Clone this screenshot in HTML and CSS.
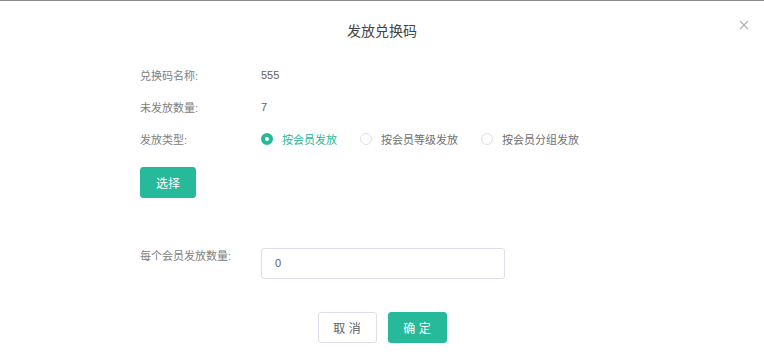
FILE: index.html
```html
<!DOCTYPE html>
<html lang="zh-CN">
<head>
  <meta charset="UTF-8">
  <title>发放兑换码</title>
  <link rel="stylesheet" href="styles.css">
</head>
<body>
  <div class="topline"></div>
  <div class="dialog">
    <div class="header">
      <span class="title">发放兑换码</span>
      <span class="close">
        <svg width="10" height="10" viewBox="0 0 10 10"><path d="M1 1L9 9M9 1L1 9" stroke="#b4b4b4" stroke-width="1.2" fill="none"/></svg>
      </span>
    </div>

    <div class="form">
      <div class="row">
        <span class="label">兑换码名称:</span>
        <span class="value">555</span>
      </div>
      <div class="row">
        <span class="label">未发放数量:</span>
        <span class="value">7</span>
      </div>
      <div class="row">
        <span class="label">发放类型:</span>
        <div class="radios">
          <label class="radio checked"><span class="dot"></span>按会员发放</label>
          <label class="radio"><span class="dot"></span>按会员等级发放</label>
          <label class="radio"><span class="dot"></span>按会员分组发放</label>
        </div>
      </div>
      <div class="pick-row">
        <button class="btn primary">选择</button>
      </div>
      <div class="row input-row">
        <span class="label">每个会员发放数量:</span>
        <div class="input">0</div>
      </div>
    </div>

    <div class="footer">
      <button class="btn">取 消</button>
      <button class="btn primary">确 定</button>
    </div>
  </div>
</body>
</html>
```

FILE: styles.css
```css
body {
  margin: 0;
  background: #fff;
  font-family: "Liberation Sans", "Noto Sans CJK SC", sans-serif;
  font-size: 11px;
  color: #666;
}

.topline {
  height: 1px;
  background: #8c8c8c;
}

.header {
  position: relative;
  height: 58px;
  line-height: 60px;
  text-align: center;
}

.title {
  font-size: 14px;
  color: #444;
}

.close {
  position: absolute;
  right: 15px;
  top: 19px;
  line-height: 0;
}

.form {
  padding-left: 140px;
}

.row {
  display: flex;
  height: 32px;
  align-items: center;
}

.label {
  width: 121px;
  color: #808080;
}

.value {
  color: #606060;
}

.radios {
  display: flex;
  gap: 23px;
}

.radio {
  display: flex;
  align-items: center;
  gap: 9px;
  color: #707070;
}

.dot {
  width: 10px;
  height: 10px;
  border: 1px solid #dcdfe6;
  border-radius: 50%;
  box-sizing: content-box;
}

.radio.checked {
  color: #26b99a;
}

.radio.checked .dot {
  width: 4px;
  height: 4px;
  border: 4px solid #26b99a;
  background: #fff;
}

.pick-row {
  margin-top: 12px;
}

.btn {
  height: 31px;
  padding: 0;
  width: 59px;
  border: 1px solid #dcdfe6;
  border-radius: 3px;
  background: #fff;
  color: #606060;
  font-family: inherit;
  font-size: 12px;
}

.btn.primary {
  background: #26b99a;
  border-color: #26b99a;
  color: #fff;
}

.pick-row .btn {
  width: 56px;
}

.input-row {
  margin-top: 50px;
  height: 31px;
  align-items: flex-start;
}

.input-row .label {
  line-height: 16px;
}

.input {
  width: 244px;
  height: 31px;
  box-sizing: border-box;
  border: 1px solid #dcdfe6;
  border-radius: 3px;
  padding-left: 13px;
  line-height: 29px;
  color: #606060;
}

.footer {
  display: flex;
  justify-content: center;
  gap: 11px;
  margin-top: 33px;
}
```
